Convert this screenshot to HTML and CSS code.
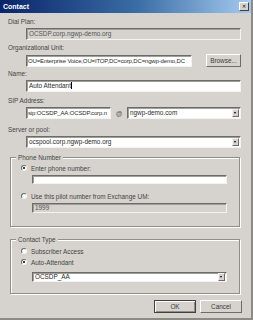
FILE: index.html
```html
<!DOCTYPE html>
<html>
<head>
<meta charset="utf-8">
<link rel="stylesheet" href="styles.css">
</head>
<body>
<div class="dialog">
  <div class="titlebar">
    <span class="title">Contact</span>
    <span class="close">✕</span>
  </div>
  <div class="content">
    <div class="label l-dial">Dial Plan:</div>
    <div class="field disabled f-dial">OCSDP.corp.ngwp-demo.org</div>

    <div class="label l-org">Organizational Unit:</div>
    <div class="row r-org">
      <div class="field tight f-org">OU=Enterprise Voice,OU=ITOP,DC=corp,DC=ngwp-demo,DC</div>
      <div class="btn browse">Browse...</div>
    </div>

    <div class="label l-name">Name:</div>
    <div class="field f-name">Auto Attendant<span class="caret"></span></div>

    <div class="label l-sip">SIP Address:</div>
    <div class="row r-sip">
      <div class="field tight f-sip">sip:OCSDP_AA:OCSDP.corp.n</div>
      <span class="at">@</span>
      <div class="field combo f-domain"><span class="ctext">ngwp-demo.com</span><span class="arrow"></span></div>
    </div>

    <div class="label l-server">Server or pool:</div>
    <div class="field combo f-server"><span class="ctext">ocspool.corp.ngwp-demo.org</span><span class="arrow"></span></div>

    <div class="group g-phone">
      <span class="legend">Phone Number</span>
      <div class="opt o-enter"><span class="radio on"></span>Enter phone number:</div>
      <div class="field sub f-phone"></div>
      <div class="opt o-pilot"><span class="radio"></span>Use this pilot number from Exchange UM:</div>
      <div class="field sub disabled f-pilot">1999</div>
    </div>

    <div class="group g-type">
      <span class="legend">Contact Type</span>
      <div class="opt o-sub"><span class="radio"></span>Subscriber Access</div>
      <div class="opt o-aa"><span class="radio on"></span>Auto-Attendant</div>
      <div class="field sub combo f-aa"><span class="ctext">OCSDP_AA</span><span class="arrow"></span></div>
    </div>

    <div class="buttons">
      <div class="btn default">OK</div>
      <div class="btn">Cancel</div>
    </div>
  </div>
</div>
</body>
</html>
```
FILE: styles.css
```css
html, body {
  margin: 0;
  padding: 0;
  background: #d6d3ce;
}
.dialog {
  width: 253px;
  height: 320px;
  box-sizing: border-box;
  background: #d6d3ce;
  border-right: 2px solid #8c8a85;
  border-bottom: 2px solid #8c8a85;
  font-family: "Liberation Sans", Arial, sans-serif;
  font-size: 6.4px;
  color: #444;
  overflow: hidden;
}
.titlebar {
  height: 13px;
  background: linear-gradient(to right, #0a246a 0%, #3a6ea5 55%, #a6caf0 100%);
  display: flex;
  align-items: center;
  justify-content: space-between;
  padding: 0 2px 0 3px;
}
.title {
  color: #fff;
  font-weight: bold;
  font-size: 7px;
}
.close {
  width: 8px;
  height: 7px;
  background: #d6d3ce;
  border: 1px solid;
  border-color: #fff #404040 #404040 #fff;
  font-size: 5px;
  line-height: 7px;
  text-align: center;
  color: #000;
}
.content {
  padding: 0 10px 0 8px;
  display: flex;
  flex-direction: column;
}
.label {
  height: 8px;
  line-height: 8px;
  white-space: nowrap;
}
.field {
  box-sizing: border-box;
  height: 12px;
  line-height: 10px;
  background: #fff;
  border: 1px solid;
  border-color: #6e6c68 #f4f3f1 #f4f3f1 #6e6c68;
  box-shadow: inset 1px 1px 0 #a09e9a;
  padding: 0 2px;
  margin-left: 18px;
  white-space: nowrap;
  overflow: hidden;
  color: #2a2a2a;
}
.field.tight {
  font-size: 6px;
  letter-spacing: -0.15px;
  padding: 0 1px;
}
.field.disabled {
  background: #d6d3ce;
  color: #555;
}
.l-dial { margin-top: 5px; }
.f-dial { margin-top: 2px; }
.l-org { margin-top: 4px; }
.row {
  display: flex;
  align-items: center;
}
.r-org { margin-top: 2px; height: 13px; }
.f-org { width: 166px; flex: none; }
.browse { margin-left: 14px; width: 35px; height: 13px; }
.l-name { margin-top: 3px; }
.f-name { margin-top: 2px; }
.caret {
  display: inline-block;
  width: 1px;
  height: 7px;
  background: #000;
  vertical-align: -1px;
}
.l-sip { margin-top: 5px; }
.r-sip { margin-top: 2px; }
.f-sip { width: 85px; flex: none; }
.at { width: 16px; text-align: center; font-size: 6.5px; color: #555; }
.f-domain { margin-left: 0; flex: 1; }
.l-server { margin-top: 7px; }
.f-server { margin-top: 2px; }
.combo {
  display: flex;
  align-items: center;
  padding-right: 1px;
}
.ctext { flex: 1; overflow: hidden; }
.arrow {
  width: 7px;
  height: 8px;
  box-sizing: border-box;
  background: #d6d3ce;
  border: 1px solid;
  border-color: #f4f3f1 #6e6c68 #6e6c68 #f4f3f1;
  position: relative;
}
.arrow::after {
  content: "";
  position: absolute;
  left: 1px;
  top: 2px;
  border-left: 1.5px solid transparent;
  border-right: 1.5px solid transparent;
  border-top: 2px solid #000;
}
.group {
  position: relative;
  border: 1px solid #8f8d88;
  box-shadow: 1px 1px 0 #fff, inset 1px 1px 0 #fff;
  margin-left: 2px;
  margin-right: 1px;
  display: flex;
  flex-direction: column;
}
.legend {
  position: absolute;
  top: -5px;
  left: 5px;
  background: #d6d3ce;
  padding: 0 2px;
  line-height: 9px;
}
.g-phone { margin-top: 9px; height: 70px; box-sizing: border-box; }
.g-type { margin-top: 12px; height: 55px; box-sizing: border-box; }
.opt {
  display: flex;
  align-items: center;
  height: 8px;
  padding-left: 10px;
  white-space: nowrap;
}
.radio {
  width: 6px;
  height: 6px;
  box-sizing: border-box;
  border-radius: 50%;
  background: #fff;
  border: 1px solid;
  border-color: #6e6c68 #f4f3f1 #f4f3f1 #6e6c68;
  margin-right: 4px;
  position: relative;
}
.radio.on::after {
  content: "";
  position: absolute;
  left: 1px;
  top: 1px;
  width: 2px;
  height: 2px;
  border-radius: 50%;
  background: #000;
}
.field.sub { margin-left: 21px; margin-right: 12px; }
.o-enter { margin-top: 6px; }
.f-phone { margin-top: 3px; height: 9px; }
.o-pilot { margin-top: 8px; }
.f-pilot { margin-top: 3px; height: 10px; line-height: 8px; }
.o-sub { margin-top: 7px; }
.o-aa { margin-top: 3px; }
.f-aa { margin-top: 6px; height: 10px; line-height: 8px; }
.btn {
  box-sizing: border-box;
  height: 13px;
  display: flex;
  align-items: center;
  justify-content: center;
  background: #d6d3ce;
  border: 1px solid;
  border-color: #fff #6e6c68 #6e6c68 #fff;
  color: #3a3a3a;
}
.buttons {
  display: flex;
  justify-content: flex-end;
  gap: 4px;
  margin-top: 6px;
  margin-right: -1px;
}
.buttons .btn { width: 42px; }
.btn.default {
  border-color: #404040;
  box-shadow: inset 1px 1px 0 #fff, inset -1px -1px 0 #8f8d88;
}
```
